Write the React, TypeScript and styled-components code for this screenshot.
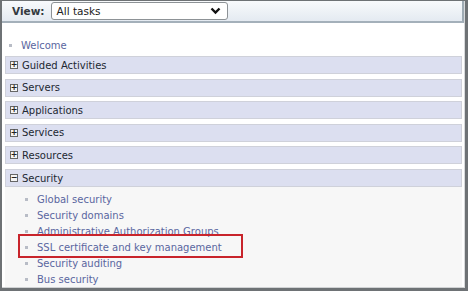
import React from 'react';
import styled, { createGlobalStyle } from 'styled-components';

const GlobalStyle = createGlobalStyle`
  html, body {
    margin: 0;
    padding: 0;
    background: #ffffff;
  }
  body {
    font-family: "DejaVu Sans", Verdana, sans-serif;
  }
`;

const groups = [
  'Guided Activities',
  'Servers',
  'Applications',
  'Services',
  'Resources',
];

const securityLinks = [
  'Global security',
  'Security domains',
  'Administrative Authorization Groups',
  'SSL certificate and key management',
  'Security auditing',
  'Bus security',
];

const App = () => {
  return (
    <>
      <GlobalStyle />
      <Frame>
        <Panel>
          <Header>
            <ViewLabel>View:</ViewLabel>
            <SelectBox>
              <span>All tasks</span>
              <svg width="11" height="8" viewBox="0 0 11 8">
                <path d="M1.5 1.5 L5.5 5.5 L9.5 1.5" fill="none" stroke="#111" strokeWidth="2.4" />
              </svg>
            </SelectBox>
          </Header>
          <Tree>
            <TopLink>
              <Bullet />
              <LinkText>Welcome</LinkText>
            </TopLink>
            {groups.map((g) => (
              <GroupRow key={g}>
                <Toggle>+</Toggle>
                <GroupTitle>{g}</GroupTitle>
              </GroupRow>
            ))}
            <GroupRow $open>
              <Toggle>−</Toggle>
              <GroupTitle>Security</GroupTitle>
            </GroupRow>
            <SubList>
              {securityLinks.map((l) => (
                <SubItem key={l} $highlight={l.startsWith('SSL')}>
                  <Bullet />
                  <LinkText>{l}</LinkText>
                </SubItem>
              ))}
            </SubList>
          </Tree>
        </Panel>
      </Frame>
    </>
  );
};

export default App;

const Frame = styled.div`
  width: 468px;
  height: 291px;
  box-sizing: border-box;
  border: 2px solid #6e7275;
  border-top-width: 1px;
  border-bottom-width: 3px;
  border-right-width: 3px;
  background: #ffffff;
  overflow: hidden;
`;

const Panel = styled.div`
  height: 100%;
  box-sizing: border-box;
  border-right: 1px solid #d8dadc;
  border-bottom: 1px solid #d0d2d4;
  display: flex;
  flex-direction: column;
`;

const Header = styled.div`
  height: 26px;
  box-sizing: border-box;
  display: flex;
  align-items: center;
  gap: 6px;
  padding-left: 10px;
  background: linear-gradient(#f8fafc, #e4eaf1);
  border-bottom: 2px solid #a4b0ba;
  border-right: 2px solid #9fabb4;
`;

const ViewLabel = styled.span`
  font-size: 10.5px;
  font-weight: bold;
  color: #333a40;
`;

const SelectBox = styled.div`
  width: 177px;
  height: 18px;
  box-sizing: border-box;
  border: 1px solid #8d9296;
  border-radius: 3px;
  background: #ffffff;
  display: flex;
  align-items: center;
  justify-content: space-between;
  padding: 0 6px 0 5px;
  font-size: 10.5px;
  color: #222;
`;

const Tree = styled.div`
  flex: 1;
  display: flex;
  flex-direction: column;
  padding: 14px 2px 0 3px;
`;

const TopLink = styled.div`
  display: flex;
  align-items: center;
  height: 16px;
  padding-left: 4px;
  margin-bottom: 3px;
`;

const Bullet = styled.span`
  width: 3px;
  height: 3px;
  background: #b8bcc6;
  margin-right: 9px;
  flex-shrink: 0;
`;

const LinkText = styled.span`
  font-size: 10px;
  color: #5a66a0;
  white-space: nowrap;
`;

const GroupRow = styled.div<{ $open?: boolean }>`
  height: 18px;
  box-sizing: border-box;
  display: flex;
  align-items: center;
  gap: 4px;
  padding-left: 4px;
  background: #dcdff0;
  border: 1px solid #cfd1da;
  margin-bottom: ${(p) => (p.$open ? '0' : '4.6px')};
`;

const Toggle = styled.span`
  width: 8px;
  height: 8px;
  box-sizing: border-box;
  border: 1px solid #666;
  background: #f4f4f4;
  display: flex;
  align-items: center;
  justify-content: center;
  font-size: 8px;
  line-height: 1;
  font-weight: bold;
  color: #222;
`;

const GroupTitle = styled.span`
  font-size: 10px;
  color: #222831;
  white-space: nowrap;
`;

const SubList = styled.div`
  flex: 1;
  background: #f7f7f7;
  padding: 4px 0 0 17px;
  display: flex;
  flex-direction: column;
`;

const SubItem = styled.div<{ $highlight?: boolean }>`
  position: relative;
  display: flex;
  align-items: center;
  height: 16px;
  padding-left: 3px;

  ${(p) =>
    p.$highlight &&
    `
    &::after {
      content: '';
      position: absolute;
      left: -4px;
      top: -5px;
      width: 225px;
      height: 24px;
      box-sizing: border-box;
      border: 2px solid #c8242b;
    }
  `}
`;
